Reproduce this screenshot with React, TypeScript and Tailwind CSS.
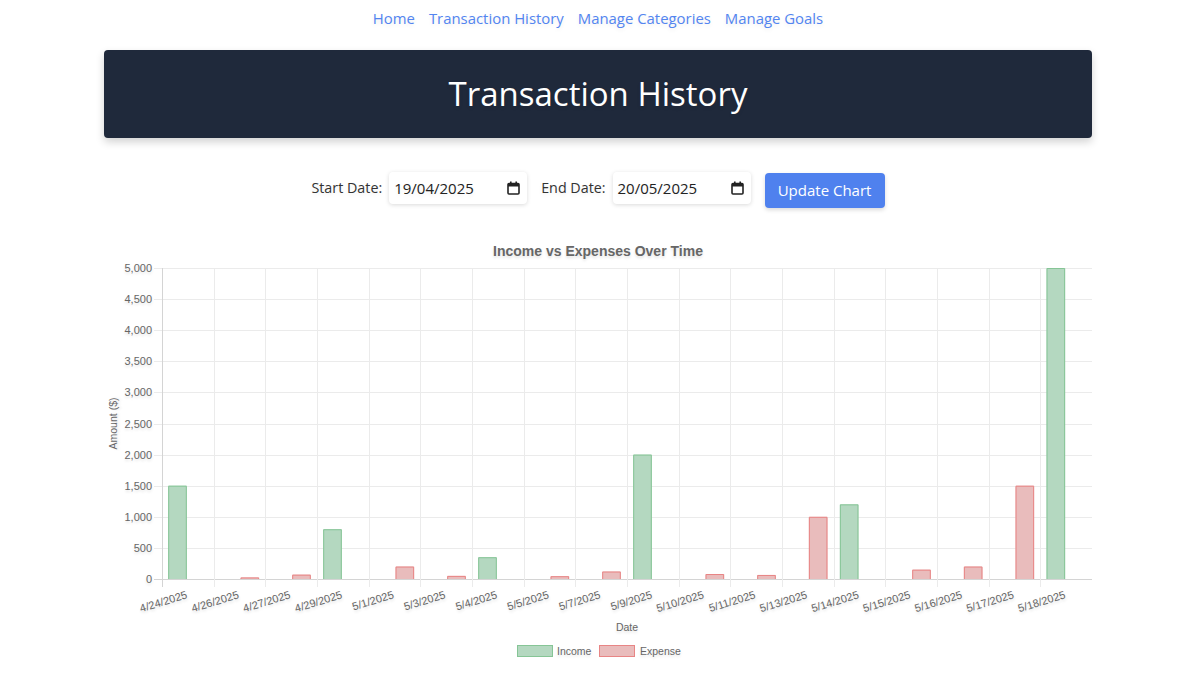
import React from "react";

const labels = [
  "4/24/2025", "4/26/2025", "4/27/2025", "4/29/2025", "5/1/2025", "5/3/2025",
  "5/4/2025", "5/5/2025", "5/7/2025", "5/9/2025", "5/10/2025", "5/11/2025",
  "5/13/2025", "5/14/2025", "5/15/2025", "5/16/2025", "5/17/2025", "5/18/2025",
];
const income: Record<number, number> = { 0: 1500, 3: 800, 6: 350, 9: 2000, 13: 1200, 17: 5000 };
const expense: Record<number, number> = {
  1: 25, 2: 70, 4: 200, 5: 50, 7: 45, 8: 120, 10: 80, 11: 65, 12: 1000, 14: 150, 15: 200, 16: 1500,
};

// plot area inside the svg
const L = 58, R = 988, T = 32, B = 343;
const cw = (R - L) / labels.length;
const bw = ((cw * 0.8) / 2) * 0.9;
const yOf = (v: number) => B - (v / 5000) * (B - T);

const INC_FILL = "#b4d8c0", INC_LINE = "#86c596";
const EXP_FILL = "#e9bcbc", EXP_LINE = "#e88585";

function Bar({ x, v, fill, line }: { x: number; v: number; fill: string; line: string }) {
  const y = yOf(v);
  return (
    <g>
      <rect x={x} y={y} width={bw} height={B - y} fill={fill} />
      <path d={`M${x + 0.5},${B} V${y + 0.5} H${x + bw - 0.5} V${B}`} fill="none" stroke={line} strokeWidth={1} />
    </g>
  );
}

function Chart() {
  const ticks = Array.from({ length: 11 }, (_, i) => i * 500);
  return (
    <svg width={988} height={432} className="block [text-shadow:0_2px_3px_rgba(0,0,0,0.12)]" style={{ fontFamily: '"Liberation Sans", Arial, sans-serif' }}>
      <text x={494} y={20} textAnchor="middle" fontSize={14} fontWeight={700} fill="#666">
        Income vs Expenses Over Time
      </text>

      {/* horizontal grid + y ticks */}
      {ticks.map((t) => (
        <g key={t}>
          <line x1={L - 8} x2={R} y1={Math.round(yOf(t)) + 0.5} y2={Math.round(yOf(t)) + 0.5} stroke={t === 0 ? "#d4d4d4" : "#ebebeb"} />
          <text x={L - 10} y={yOf(t) + 4} textAnchor="end" fontSize={11} fill="#666">
            {t.toLocaleString("en-US")}
          </text>
        </g>
      ))}

      {/* vertical grid */}
      {Array.from({ length: labels.length + 1 }, (_, i) => (
        <line key={i} x1={Math.round(L + i * cw) + 0.5} x2={Math.round(L + i * cw) + 0.5} y1={T} y2={B + 8} stroke={i === 0 ? "#d4d4d4" : "#ebebeb"} />
      ))}

      {/* bars */}
      {labels.map((_, i) => (
        <g key={i}>
          {income[i] && <Bar x={L + i * cw + cw * 0.1 + (cw * 0.4 - bw) / 2} v={income[i]} fill={INC_FILL} line={INC_LINE} />}
          {expense[i] && <Bar x={L + i * cw + cw * 0.5 + (cw * 0.4 - bw) / 2} v={expense[i]} fill={EXP_FILL} line={EXP_LINE} />}
        </g>
      ))}

      {/* x labels */}
      {labels.map((l, i) => (
        <text key={l} transform={`translate(${L + i * cw + cw / 2},${B + 19}) rotate(-17)`} textAnchor="end" fontSize={11} fill="#666">
          {l}
        </text>
      ))}

      <text x={523} y={395} textAnchor="middle" fontSize={10.5} fill="#666">Date</text>
      <text transform={`translate(13,${(T + B) / 2}) rotate(-90)`} textAnchor="middle" fontSize={10.5} fill="#666">
        Amount ($)
      </text>

      {/* legend */}
      <rect x={413.5} y={409.5} width={35} height={11} fill={INC_FILL} stroke={INC_LINE} />
      <text x={453} y={419} fontSize={10.5} fill="#666">Income</text>
      <rect x={495.5} y={409.5} width={35} height={11} fill={EXP_FILL} stroke={EXP_LINE} />
      <text x={536} y={419} fontSize={10.5} fill="#666">Expense</text>
    </svg>
  );
}

function CalendarIcon() {
  return (
    <svg width="13" height="14" viewBox="0 0 13 14" fill="none">
      <rect x="1" y="2.5" width="11" height="10.5" rx="1" stroke="#222" strokeWidth="1.6" />
      <rect x="1" y="2.5" width="11" height="3" fill="#222" />
      <rect x="3" y="0.5" width="1.6" height="3" fill="#222" />
      <rect x="8.4" y="0.5" width="1.6" height="3" fill="#222" />
    </svg>
  );
}

function DateField({ value }: { value: string }) {
  return (
    <div className="flex h-8 w-[138px] items-center justify-between rounded bg-white pl-[5px] pr-[7px] text-[15px] text-[#222] shadow-[0_1px_4px_rgba(0,0,0,0.15)]">
      <span>{value}</span>
      <CalendarIcon />
    </div>
  );
}

export default function App() {
  return (
    <div className="min-h-[675px] bg-white font-['Open_Sans',sans-serif] [text-shadow:0_2px_4px_rgba(0,0,0,0.08)]">
      <div className="ml-[104px] w-[988px]">
        <nav className="flex h-9 items-center justify-center gap-[14px] text-[14.9px] text-[#5385f0]">
          <a href="#">Home</a>
          <a href="#">Transaction History</a>
          <a href="#">Manage Categories</a>
          <a href="#">Manage Goals</a>
        </nav>

        <header className="mt-[14px] flex h-[88px] items-center justify-center rounded bg-[#1f293b] shadow-[0_4px_8px_rgba(0,0,0,0.18)]">
          <h1 className="text-[33px] text-white">Transaction History</h1>
        </header>

        <div className="mt-[34px] flex items-start justify-center text-[14.3px] text-[#333]">
          <span className="mr-[7px] flex h-8 items-center">Start Date:</span>
          <DateField value="19/04/2025" />
          <span className="ml-[14px] mr-[7px] flex h-8 items-center">End Date:</span>
          <DateField value="20/05/2025" />
          <button className="ml-[14px] mt-[1px] h-[35px] w-[120px] rounded bg-[#4f81ee] text-[15px] font-medium text-white shadow-[0_2px_4px_rgba(0,0,0,0.15)]">
            Update Chart
          </button>
        </div>

        <div className="mt-[28px]">
          <Chart />
        </div>
      </div>
    </div>
  );
}
